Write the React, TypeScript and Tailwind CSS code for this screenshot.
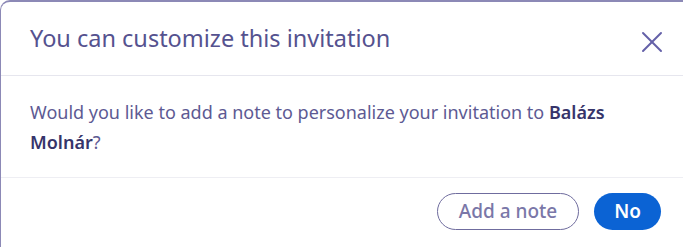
import React from "react";
import { X } from "lucide-react";

export default function App() {
  return (
    <div
      className="w-[683px] h-[247px] bg-white overflow-hidden"
      style={{ fontFamily: '"Noto Sans", "Open Sans", sans-serif' }}
    >
      <div className="h-full border-t-2 border-l border-[#8c89b6] rounded-tl-[10px] bg-white flex flex-col">
        <div className="h-[74px] flex items-center justify-between pl-[29px] pr-[13px] border-b border-[#e6e6ee]">
          <h2 className="text-[23.5px] text-[#55528f] font-normal">You can customize this invitation</h2>
          <button className="text-[#6460a8] mt-[6px]">
            <X className="w-[36px] h-[36px]" strokeWidth={1.3} />
          </button>
        </div>
        <div className="h-[102px] pl-[29px] pr-[30px] pt-[21px] border-b border-[#eeeef3] text-[18px] leading-[30px] text-[#5d5a93]">
          <p>
            Would you like to add a note to personalize your invitation to{" "}
            <span className="font-semibold text-[#36346a]">Balázs</span>
          </p>
          <p>
            <span className="font-semibold text-[#36346a]">Molnár</span>?
          </p>
        </div>
        <div className="flex-1 flex items-start justify-end gap-[15px] pr-[22px] pt-[15px]">
          <button className="h-[37px] px-[21px] rounded-full border border-[#6f6c9e] text-[19px] font-medium text-[#7a77a8]">
            Add a note
          </button>
          <button className="h-[37px] px-[20px] rounded-full bg-[#0b63d4] text-[19px] font-semibold text-white">
            No
          </button>
        </div>
      </div>
    </div>
  );
}
